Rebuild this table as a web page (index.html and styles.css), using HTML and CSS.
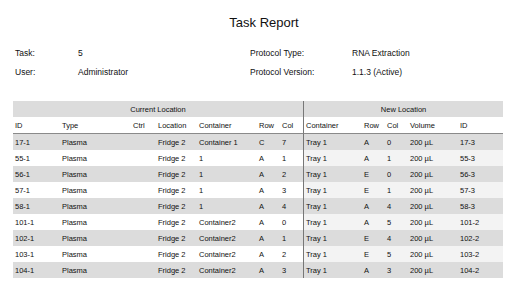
FILE: index.html
```html
<!DOCTYPE html>
<html>
<head>
<meta charset="utf-8">
<link rel="stylesheet" href="styles.css">
</head>
<body>
<h1 class="title">Task Report</h1>
<div class="info">
  <div>Task:</div><div>5</div><div>Protocol Type:</div><div>RNA Extraction</div>
  <div>User:</div><div>Administrator</div><div>Protocol Version:</div><div>1.1.3 (Active)</div>
</div>
<table class="report">
  <colgroup>
    <col class="w47"><col class="w71"><col class="w25"><col class="w41"><col class="w60"><col class="w23"><col class="w23">
    <col class="w59"><col class="w23"><col class="w23"><col class="w50"><col class="w45">
  </colgroup>
  <thead>
    <tr class="group">
      <th colspan="7">Current Location</th>
      <th colspan="5" class="sep">New Location</th>
    </tr>
    <tr class="cols">
      <th>ID</th><th>Type</th><th>Ctrl</th><th>Location</th><th>Container</th><th>Row</th><th>Col</th>
      <th class="sep">Container</th><th>Row</th><th>Col</th><th>Volume</th><th>ID</th>
    </tr>
  </thead>
  <tbody>
    <tr><td>17-1</td><td>Plasma</td><td></td><td>Fridge 2</td><td>Container 1</td><td>C</td><td>7</td><td class="sep r">Tray 1</td><td class="r">A</td><td class="r">0</td><td class="r">200 µL</td><td class="r">17-3</td></tr>
    <tr><td>55-1</td><td>Plasma</td><td></td><td>Fridge 2</td><td>1</td><td>A</td><td>1</td><td class="sep r">Tray 1</td><td class="r">A</td><td class="r">1</td><td class="r">200 µL</td><td class="r">55-3</td></tr>
    <tr><td>56-1</td><td>Plasma</td><td></td><td>Fridge 2</td><td>1</td><td>A</td><td>2</td><td class="sep r">Tray 1</td><td class="r">E</td><td class="r">0</td><td class="r">200 µL</td><td class="r">56-3</td></tr>
    <tr><td>57-1</td><td>Plasma</td><td></td><td>Fridge 2</td><td>1</td><td>A</td><td>3</td><td class="sep r">Tray 1</td><td class="r">E</td><td class="r">1</td><td class="r">200 µL</td><td class="r">57-3</td></tr>
    <tr><td>58-1</td><td>Plasma</td><td></td><td>Fridge 2</td><td>1</td><td>A</td><td>4</td><td class="sep r">Tray 1</td><td class="r">A</td><td class="r">4</td><td class="r">200 µL</td><td class="r">58-3</td></tr>
    <tr><td>101-1</td><td>Plasma</td><td></td><td>Fridge 2</td><td>Container2</td><td>A</td><td>0</td><td class="sep r">Tray 1</td><td class="r">A</td><td class="r">5</td><td class="r">200 µL</td><td class="r">101-2</td></tr>
    <tr><td>102-1</td><td>Plasma</td><td></td><td>Fridge 2</td><td>Container2</td><td>A</td><td>1</td><td class="sep r">Tray 1</td><td class="r">E</td><td class="r">4</td><td class="r">200 µL</td><td class="r">102-2</td></tr>
    <tr><td>103-1</td><td>Plasma</td><td></td><td>Fridge 2</td><td>Container2</td><td>A</td><td>2</td><td class="sep r">Tray 1</td><td class="r">E</td><td class="r">5</td><td class="r">200 µL</td><td class="r">103-2</td></tr>
    <tr><td>104-1</td><td>Plasma</td><td></td><td>Fridge 2</td><td>Container2</td><td>A</td><td>3</td><td class="sep r">Tray 1</td><td class="r">A</td><td class="r">3</td><td class="r">200 µL</td><td class="r">104-2</td></tr>
  </tbody>
</table>
</body>
</html>
```
FILE: styles.css
```css
html, body {
  margin: 0;
  padding: 0;
  background: #ffffff;
  color: #111111;
  font-family: "Liberation Sans", Arial, sans-serif;
}
.title {
  margin: 15px 0 0 0;
  padding-left: 12px;
  font-size: 13px;
  font-weight: normal;
  line-height: 16px;
  text-align: center;
}
.info {
  display: grid;
  grid-template-columns: 63px 172px 102px auto;
  grid-auto-rows: 19px;
  align-items: center;
  margin-top: 12px;
  padding-left: 15px;
  font-size: 8.5px;
}
.report {
  margin: 20px 0 0 13px;
  width: 490px;
  table-layout: fixed;
  border-collapse: separate;
  border-spacing: 0;
  font-size: 7.5px;
}
.w47 { width: 47px; }
.w71 { width: 71px; }
.w25 { width: 25px; }
.w41 { width: 41px; }
.w60 { width: 60px; }
.w23 { width: 23px; }
.w59 { width: 59px; }
.w50 { width: 50px; }
.w45 { width: 45px; }
.report th, .report td {
  box-sizing: border-box;
  height: 16px;
  padding: 0 0 0 2px;
  text-align: left;
  font-weight: normal;
  white-space: nowrap;
  overflow: hidden;
  vertical-align: middle;
}
.report .group th {
  background: #dcdcdc;
  text-align: center;
  padding: 0;
}
.report .cols th {
  background: #ffffff;
  border-bottom: 1px solid #8a8a8a;
  height: 17px;
}
.report .sep {
  border-left: 1px solid #777777;
  padding-left: 2px;
}
.report tbody tr:nth-child(odd) td {
  background: #dcdcdc;
}
.report tbody tr:nth-child(even) td {
  background: #ffffff;
}
.report tbody tr:nth-child(even) td.r {
  background: #f3f3f3;
}
```
